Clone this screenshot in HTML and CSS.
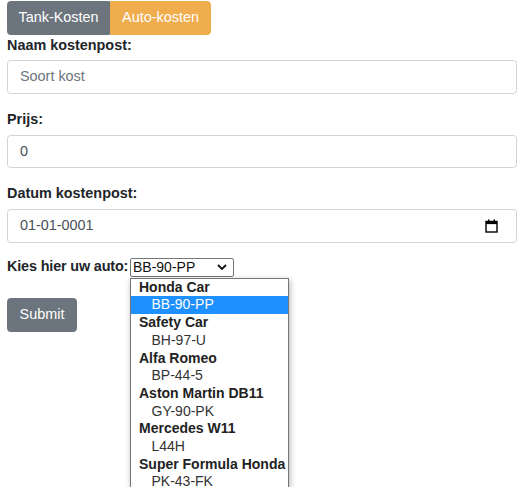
FILE: index.html
```html
<!DOCTYPE html>
<html lang="nl">
<head>
<meta charset="utf-8">
<title>Kosten</title>
<link rel="stylesheet" href="styles.css">
</head>
<body>
<div class="page">
  <div class="btn-group">
    <button class="btn btn-gray btn-left">Tank-Kosten</button>
    <button class="btn btn-orange btn-right">Auto-kosten</button>
  </div>
  <form class="form">
    <div class="form-group">
      <label class="label">Naam kostenpost:</label>
      <div class="input"><span class="placeholder">Soort kost</span></div>
    </div>
    <div class="form-group">
      <label class="label">Prijs:</label>
      <div class="input"><span class="value">0</span></div>
    </div>
    <div class="form-group">
      <label class="label">Datum kostenpost:</label>
      <div class="input input-date">
        <span class="value">01-01-0001</span>
        <svg class="cal" width="13" height="14" viewBox="0 0 13 14">
          <rect x="1" y="2.5" width="11" height="10.5" fill="none" stroke="#000" stroke-width="1.4"/>
          <rect x="1" y="2.5" width="11" height="2.6" fill="#000"/>
          <rect x="3" y="0.5" width="1.5" height="2.5" fill="#000"/>
          <rect x="8.5" y="0.5" width="1.5" height="2.5" fill="#000"/>
        </svg>
      </div>
    </div>
    <div class="select-row">
      <span class="label-inline">Kies hier uw auto:</span>
      <div class="select-wrap">
        <div class="select">
          <span>BB-90-PP</span>
          <svg class="chev" width="10" height="6" viewBox="0 0 10 6"><path d="M1 1 L5 5 L9 1" fill="none" stroke="#111" stroke-width="1.8"/></svg>
        </div>
        <div class="dropdown">
          <div class="grp">Honda Car</div>
          <div class="opt sel">BB-90-PP</div>
          <div class="grp">Safety Car</div>
          <div class="opt">BH-97-U</div>
          <div class="grp">Alfa Romeo</div>
          <div class="opt">BP-44-5</div>
          <div class="grp">Aston Martin DB11</div>
          <div class="opt">GY-90-PK</div>
          <div class="grp">Mercedes W11</div>
          <div class="opt">L44H</div>
          <div class="grp">Super Formula Honda</div>
          <div class="opt">PK-43-FK</div>
        </div>
      </div>
    </div>
    <button type="button" class="btn btn-gray btn-submit">Submit</button>
  </form>
</div>
</body>
</html>
```

FILE: styles.css
```css
html, body {
  margin: 0;
  padding: 0;
  height: 487px;
}
body {
  background: #fff;
  font-family: "Liberation Sans", Arial, sans-serif;
  font-size: 14.4px;
  line-height: 21.6px;
  color: #212529;
}
.page {
  box-sizing: border-box;
  height: 487px;
  padding: 0.5px 8px 0 7px;
}
.btn-group {
  display: flex;
}
.btn {
  box-sizing: border-box;
  font-family: "Liberation Sans", Arial, sans-serif;
  font-size: 14.4px;
  line-height: 21.6px;
  height: 34px;
  padding: 0;
  border: 1px solid transparent;
  color: #fff;
  cursor: pointer;
  margin: 0;
  white-space: nowrap;
  text-align: center;
}
.btn-gray {
  background: #6c757d;
  border-color: #6c757d;
}
.btn-orange {
  background: #f0ad4e;
  border-color: #f0ad4e;
}
.btn-left {
  border-radius: 3.6px 0 0 3.6px;
  width: 103px;
}
.btn-right {
  border-radius: 0 3.6px 3.6px 0;
  width: 101px;
}
.form {
  margin: 0;
}
.form-group {
  margin-bottom: 15.4px;
}
.label {
  display: block;
  font-weight: bold;
  line-height: 21.6px;
  margin-bottom: 4px;
}
.input {
  box-sizing: border-box;
  height: 33.5px;
  border: 1px solid #ced4da;
  border-radius: 3.6px;
  padding: 0 10.8px 0 12px;
  display: flex;
  align-items: center;
}
.placeholder {
  color: #6c757d;
}
.value {
  color: #495057;
}
.input-date {
  justify-content: space-between;
  padding-right: 18px;
}
.cal {
  display: block;
}
.select-row {
  display: flex;
  align-items: center;
  height: 21.6px;
  gap: 3px;
  margin-top: -1.5px;
}
.label-inline {
  font-weight: bold;
  width: 120px;
  flex: none;
  white-space: nowrap;
  letter-spacing: -0.15px;
}
.select-wrap {
  position: relative;
}
.select {
  box-sizing: border-box;
  width: 104px;
  height: 19px;
  border: 1px solid #767676;
  border-radius: 2px;
  display: flex;
  align-items: center;
  justify-content: space-between;
  padding: 0 6px 0 2px;
  font-size: 14px;
  line-height: 17px;
  color: #111;
}
.chev {
  display: block;
}
.dropdown {
  position: absolute;
  left: 0;
  top: 20px;
  box-sizing: border-box;
  width: 159px;
  height: 209px;
  border: 1px solid #767676;
  border-bottom: none;
  background: #fff;
  box-shadow: 1px 2px 6px rgba(0, 0, 0, 0.3);
  font-size: 14px;
  line-height: 17.7px;
  color: #111;
  overflow: hidden;
}
.grp {
  font-weight: bold;
  padding-left: 8px;
  color: #222;
}
.opt {
  padding-left: 20.5px;
  color: #333;
}
.opt.sel {
  background: #1e90ff;
  color: #fff;
}
.btn-submit {
  margin-top: 20px;
  border-radius: 3.6px;
  width: 70px;
  display: block;
}
```
